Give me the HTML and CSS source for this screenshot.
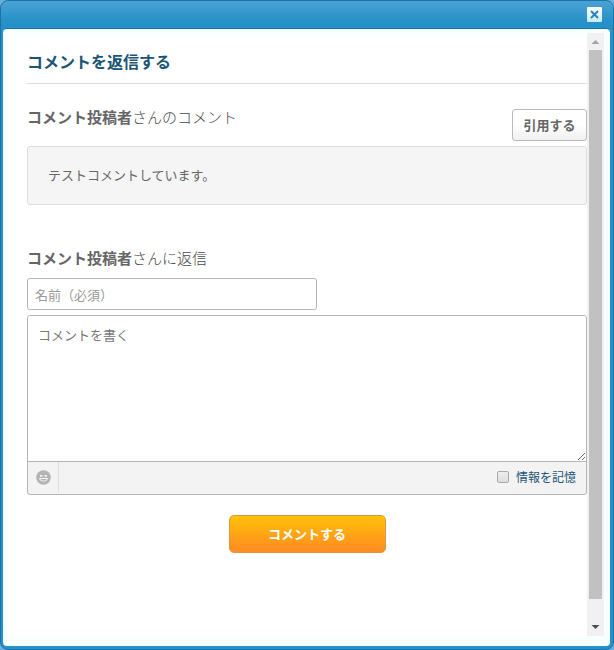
FILE: index.html
```html
<!DOCTYPE html>
<html lang="ja">
<head>
<meta charset="utf-8">
<title>コメントを返信する</title>
<link rel="stylesheet" href="styles.css">
</head>
<body>
<div class="dialog">
  <header class="titlebar">
    <button class="close" type="button" aria-label="閉じる">
      <svg viewBox="0 0 15 15" width="15" height="15"><path d="M4 4l7 7M11 4l-7 7"/></svg>
    </button>
  </header>
  <div class="frame">
    <main class="content">
      <h1 class="title">コメントを返信する</h1>
      <section class="original">
        <div class="row">
          <h2 class="heading"><b>コメント投稿者</b>さんのコメント</h2>
          <button class="quote" type="button">引用する</button>
        </div>
        <p class="comment">テストコメントしています。</p>
      </section>
      <form class="reply">
        <h2 class="heading"><b>コメント投稿者</b>さんに返信</h2>
        <input class="name" type="text" placeholder="名前（必須）" aria-label="名前（必須）">
        <div class="editor">
          <textarea class="text" placeholder="コメントを書く" aria-label="コメントを書く"></textarea>
          <div class="tools">
            <button class="emoji" type="button" aria-label="絵文字">
              <svg viewBox="0 0 15 15" width="15" height="15">
                <circle cx="7.5" cy="7.5" r="7.3" fill="#b4b4b4"/>
                <path d="M4 5.8h2.500M8.500 5.800h2.500" stroke="#f3f3f3" stroke-width="1.800" fill="none"/>
                <path d="M3 8h9c-.2 4.600-8.800 4.600-9 0z" fill="#f3f3f3"/>
                <path d="M4.500 9h6c-.5 2.200-5.500 2.200-6 0z" fill="#b4b4b4"/>
              </svg>
            </button>
            <label class="remember"><input class="check" type="checkbox">情報を記憶</label>
          </div>
        </div>
        <button class="submit" type="button">コメントする</button>
      </form>
    </main>
    <div class="scrollbar" aria-hidden="true">
      <svg class="arrow" viewBox="0 0 13 17" width="13" height="17"><path d="M2.500 11l4-4 4 4z" fill="#a3a3a3"/></svg>
      <div class="thumb"></div>
      <svg class="arrow" viewBox="0 0 13 17" width="13" height="17"><path d="M2.500 6h8l-4 4z" fill="#505050"/></svg>
    </div>
  </div>
</div>
</body>
</html>
```
FILE: styles.css
```css
* {
  box-sizing: border-box;
}

body {
  margin: 0;
  background: #6aaede;
  color: #666;
  font: 13px/20px "Noto Sans CJK JP", sans-serif;
}

button,
input,
textarea {
  margin: 0;
  color: inherit;
  font-family: inherit;
}

.dialog {
  display: flex;
  flex-direction: column;
  min-height: 100vh;
  padding: 0 3px 3px 2px;
  border: 1px solid #1b74a8;
  border-radius: 8px;
  background: linear-gradient(#4ba3d4, #2690c8 20px, #2690c8);
}

.titlebar {
  display: flex;
  justify-content: flex-end;
  padding: 6px 8px 6px 0;
}

.close {
  display: block;
  width: 15px;
  height: 15px;
  padding: 0;
  border: 0;
  border-radius: 1px;
  background: linear-gradient(#fff, #c9e8fa);
}

.close svg {
  display: block;
  fill: none;
  stroke: #2a82bb;
  stroke-width: 2;
}

.frame {
  display: flex;
  flex: 1;
  padding: 4px 6px 10px 4px;
  border-top: 1px solid #1b74a8;
  border-radius: 4px;
  background: #f7ffff;
}

.content {
  flex: 1;
  padding: 18px 0 0 20px;
  background: #fff;
}

.title {
  margin: 0 0 25px;
  padding-bottom: 11px;
  border-bottom: 1px solid #ddd;
  color: #1c5574;
  font-size: 16px;
  line-height: 21px;
}

.row {
  display: flex;
  justify-content: space-between;
  align-items: flex-start;
}

.heading {
  margin: 0;
  color: #4a4a4a;
  font-size: 15px;
  line-height: 20px;
  font-weight: 300;
}

.heading b {
  color: #666;
  font-weight: 700;
}

.row .heading {
  margin-top: -2px;
}

.quote {
  width: 75px;
  height: 32px;
  padding: 0 0 2px;
  border: 1px solid #bbb;
  border-radius: 3px;
  background: linear-gradient(#fff 50%, #f0f0f0);
  font-size: 13px;
  font-weight: 700;
}

.comment {
  margin: 5px 0 43px;
  padding: 18px 20px 19px;
  border: 1px solid #ddd;
  border-radius: 3px;
  background: #f5f5f5;
}

.name {
  display: block;
  width: 290px;
  max-width: 100%;
  height: 32px;
  margin: 10px 0 5px;
  padding: 0 7px;
  border: 1px solid #b5b5b5;
  border-radius: 3px;
  background: #fff;
  font-size: 13px;
}

.name::placeholder {
  color: #999;
}

.editor {
  overflow: hidden;
  border: 1px solid #b5b5b5;
  border-radius: 3px;
  background: #f3f3f3;
}

.text {
  display: block;
  width: 100%;
  height: 145px;
  padding: 9px 10px;
  border: 0;
  background: #fff;
  font-size: 13px;
  line-height: 20px;
  resize: vertical;
}

.text::placeholder {
  color: #777;
}

.tools {
  display: flex;
  justify-content: space-between;
  height: 33px;
  padding: 0 10px 2px 0;
  border-top: 1px solid #b5b5b5;
}

.emoji {
  width: 31px;
  padding: 0 7px 0 8px;
  border: 0;
  border-right: 1px solid #ddd;
  background: none;
}

.emoji svg {
  display: block;
}

.remember {
  display: flex;
  align-items: center;
  gap: 7px;
  color: #1c5574;
  font-size: 12px;
}

.check {
  width: 12px;
  height: 12px;
  border: 1px solid #aaa;
  border-radius: 2px;
  background: linear-gradient(#eee, #ddd);
  appearance: none;
}

.submit {
  display: block;
  width: 157px;
  height: 38px;
  margin: 20px auto 0;
  padding: 0 0 2px;
  border: 1px solid #d99a3c;
  border-radius: 5px;
  background: linear-gradient(#ffc107, #ff8a22);
  color: #fff;
  font-size: 13px;
  font-weight: 700;
}

.scrollbar {
  display: flex;
  flex-direction: column;
  width: 17px;
  padding: 0 2px;
  background: #f1f1f1;
}

.arrow {
  display: block;
}

.thumb {
  flex: 1;
  margin-bottom: 20px;
  background: #c1c1c1;
}
```
